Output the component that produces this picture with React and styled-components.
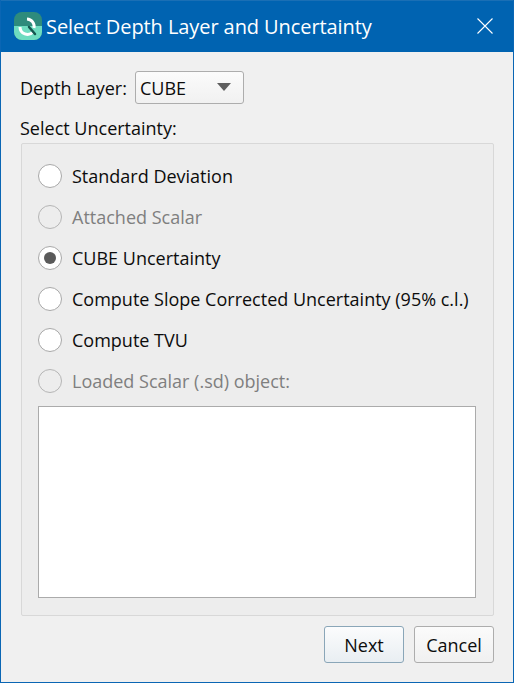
import styled, { createGlobalStyle } from "styled-components";

const GlobalStyle = createGlobalStyle`
  html, body { margin: 0; padding: 0; }
  body { font-family: "Open Sans", "Noto Sans", sans-serif; }
`;

const Dialog = styled.div`
  width: 514px;
  height: 683px;
  box-sizing: border-box;
  border: 1px solid #0a66b4;
  border-top: 0;
  background: #f0f0f0;
  display: flex;
  flex-direction: column;
  font-size: 18px;
  color: #0c0c0c;
`;

const TitleBar = styled.div`
  height: 52px;
  flex: none;
  background: #0063b1;
  box-shadow: inset 0 1px 0 #1a6fb5;
  display: flex;
  align-items: center;
  padding: 0 20px 0 12px;
  color: #fff;
  font-size: 20px;
  letter-spacing: -0.08px;
  gap: 4px;
`;

const TitleText = styled.span`
  flex: 1;
`;

const Content = styled.div`
  flex: 1;
  display: flex;
  flex-direction: column;
  padding: 19px 19px 20px 19px;
`;

const DepthRow = styled.div`
  display: flex;
  align-items: center;
  gap: 8px;
  height: 33px;
`;

const Combo = styled.div`
  width: 109px;
  height: 33px;
  box-sizing: border-box;
  border: 1px solid #adadad;
  border-radius: 3px;
  background: linear-gradient(#fbfbfb, #f1f1f1);
  display: flex;
  align-items: center;
  justify-content: space-between;
  padding: 0 12px 0 4px;
`;

const Arrow = styled.span`
  width: 0;
  height: 0;
  border-left: 7px solid transparent;
  border-right: 7px solid transparent;
  border-top: 8px solid #5f5f5f;
  margin-bottom: 2px;
`;

const SectionLabel = styled.div`
  height: 24px;
  line-height: 24px;
  margin-top: 12px;
  margin-bottom: 3px;
`;

const Group = styled.div`
  flex: none;
  height: 473px;
  box-sizing: border-box;
  border: 1px solid #d8d8d8;
  border-radius: 2px;
  background: #ededed;
  margin-left: 1px;
  padding: 11px 17px 17px 16px;
  display: flex;
  flex-direction: column;
`;

const Option = styled.div`
  height: 41px;
  flex: none;
  display: flex;
  align-items: center;
  gap: 10px;
  color: ${(p) => (p.$disabled ? "#7f7f7f" : "#0c0c0c")};
  white-space: nowrap;
`;

const Radio = styled.span`
  width: 24px;
  height: 24px;
  box-sizing: border-box;
  border-radius: 50%;
  flex: none;
  border: 1px solid ${(p) => (p.$disabled ? "#b5b5b5" : "#a8a8a8")};
  background: ${(p) => (p.$disabled ? "transparent" : "#fff")};
  display: flex;
  align-items: center;
  justify-content: center;
`;

const Dot = styled.span`
  width: 12px;
  height: 12px;
  border-radius: 50%;
  background: #5a5a5a;
`;

const ListArea = styled.div`
  flex: 1;
  margin-top: 5px;
  border: 1px solid #ababab;
  background: #fff;
`;

const Footer = styled.div`
  display: flex;
  justify-content: flex-end;
  gap: 10px;
  margin-top: 10px;
`;

const Button = styled.button`
  width: 80px;
  height: 37px;
  box-sizing: border-box;
  border: 1px solid ${(p) => (p.$primary ? "#8aa6b8" : "#adadad")};
  border-radius: 3px;
  background: ${(p) =>
    p.$primary ? "linear-gradient(#fbfcfd, #e9eef2)" : "linear-gradient(#fbfbfb, #f0f0f0)"};
  font: inherit;
  color: #0c0c0c;
  padding: 0;
`;

const AppIcon = () => (
  <svg width="28" height="28" viewBox="0 0 28 28" style={{ flex: "none", marginLeft: 1 }}>
    <rect width="28" height="28" rx="8" fill="#2e8b7c" />
    <path d="M0 14h28v6a8 8 0 0 1-8 8H8a8 8 0 0 1-8-8z" fill="#6edcc0" />
    <path d="M6 15a7.5 7.5 0 0 0 13 5" fill="none" stroke="#fff" strokeWidth="3" />
    <path d="M13 7a7.5 7.5 0 0 1 7 9" fill="none" stroke="#fff" strokeWidth="3" />
    <path d="M15 15l6 7" stroke="#14574f" strokeWidth="2.5" strokeLinecap="round" />
  </svg>
);

const CloseIcon = () => (
  <svg width="16" height="16" viewBox="0 0 16 16">
    <path d="M.5.5l15 15M15.5.5l-15 15" stroke="#fff" strokeWidth="1.1" fill="none" />
  </svg>
);

const options = [
  { label: "Standard Deviation" },
  { label: "Attached Scalar", disabled: true },
  { label: "CUBE Uncertainty", checked: true },
  { label: "Compute Slope Corrected Uncertainty (95% c.l.)" },
  { label: "Compute TVU" },
  { label: "Loaded Scalar (.sd) object:", disabled: true },
];

export default function App() {
  return (
    <>
      <GlobalStyle />
      <Dialog>
        <TitleBar>
          <AppIcon />
          <TitleText>Select Depth Layer and Uncertainty</TitleText>
          <CloseIcon />
        </TitleBar>
        <Content>
          <DepthRow>
            <span>Depth Layer:</span>
            <Combo>
              <span>CUBE</span>
              <Arrow />
            </Combo>
          </DepthRow>
          <SectionLabel>Select Uncertainty:</SectionLabel>
          <Group>
            {options.map((o) => (
              <Option key={o.label} $disabled={o.disabled}>
                <Radio $disabled={o.disabled}>{o.checked && <Dot />}</Radio>
                {o.label}
              </Option>
            ))}
            <ListArea />
          </Group>
          <Footer>
            <Button $primary>Next</Button>
            <Button>Cancel</Button>
          </Footer>
        </Content>
      </Dialog>
    </>
  );
}
